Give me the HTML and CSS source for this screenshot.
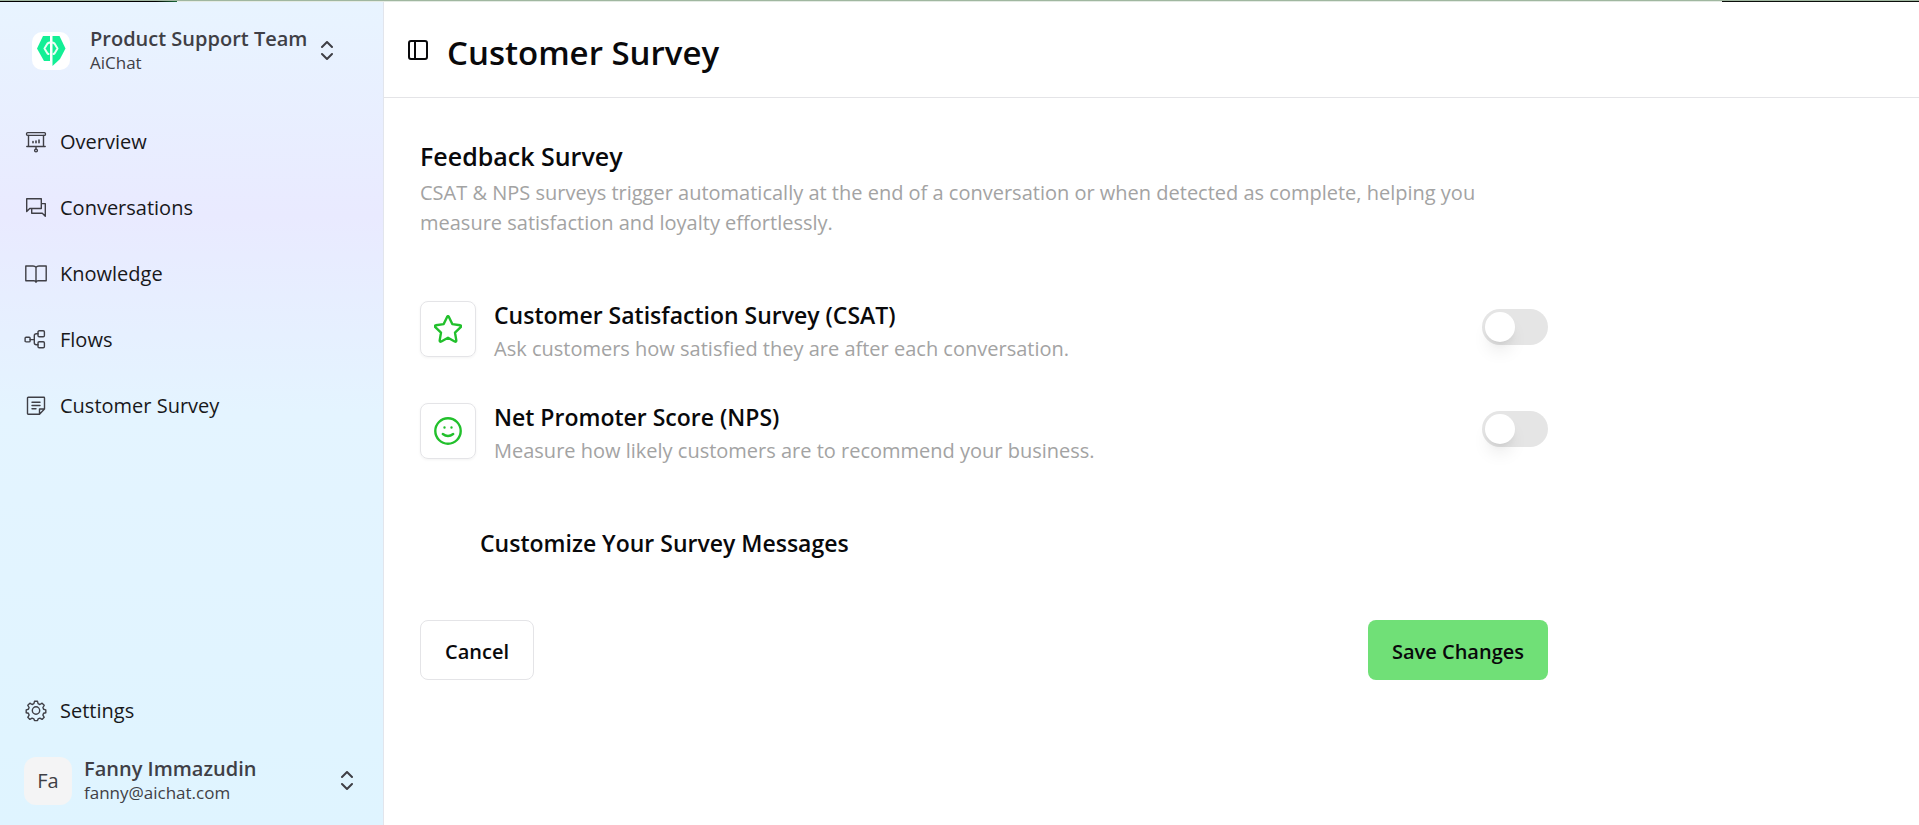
FILE: index.html
```html
<!DOCTYPE html>
<html lang="en">
<head>
<meta charset="utf-8">
<title>Customer Survey</title>
<link rel="stylesheet" href="styles.css">
</head>
<body>
<div class="topline"><span class="topline-left"></span><span class="topline-mid"></span><span class="topline-right"></span></div>
<div class="app">
  <aside class="sidebar">
    <button class="team" type="button">
      <svg class="team-logo" viewBox="0 0 38 38" aria-hidden="true">
        <rect width="38" height="38" rx="10" fill="#fff"/>
        <path d="M11 4H18V29H12L5 16.500Z" fill="#13ef95"/>
        <path d="M20.500 4H27.500L33.500 16.500L28 27L20.500 34V4Z" fill="#13ef95"/>
        <path d="M17.500 10.500L15.500 11.500L12.500 16.500L15.500 21.500L16.500 22M20.500 10.500L22.500 11.500L25.500 16.500L22.500 21.500L21.500 22" fill="none" stroke="#eafff5" stroke-width="2"/>
      </svg>
      <span class="who"><span class="who-name">Product Support Team</span><span class="who-sub">AiChat</span></span>
      <svg class="chevrons" viewBox="0 0 20 20"><path d="m5 6 5-5 5 5M5 13l5 5 5-5"/></svg>
    </button>
    <nav class="nav">
      <a class="nav-link" href="#"><svg class="icon" viewBox="0 0 20 20"><rect x=".6" y=".6" width="18.800" height="2.800" rx="1"/><path d="M2.500 3.400v11M17.500 3.400v11M.8 14.500h18.400M10 14.500v2.700"/><circle cx="10" cy="18.500" r="1.400"/><path d="M7 9.500v1.300M10 9v1.800M13 8v2.800" stroke-width="1.600"/></svg>Overview</a>
      <a class="nav-link" href="#"><svg class="icon" viewBox="0 0 20 20"><path d="M.7 13.500V.7h14.600v9.800H3.700zM15.300 5.600h4v12.700l-3-3H5.700v-4.800"/></svg>Conversations</a>
      <a class="nav-link" href="#"><svg class="icon" viewBox="0 0 20 20"><path d="M10 3.300Q9 2 7 2H-.2v14.800H8q1.500 0 2 1.500.5-1.500 2-1.500h8.200V2H13q-2 0-3 1.300zv15"/></svg>Knowledge</a>
      <a class="nav-link" href="#"><svg class="icon" viewBox="0 0 20 20"><rect x="-.9" y="7.300" width="5" height="4.600" rx="1"/><rect x="12" y=".8" width="6.400" height="6" rx="1.200"/><rect x="12" y="11.800" width="6.400" height="6" rx="1.200"/><path d="M4.100 9.600h4.200M12 3.800h-1.600q-2.100 0-2.100 2v7q0 2 2.100 2H12"/></svg>Flows</a>
      <a class="nav-link" href="#"><svg class="icon" viewBox="0 0 20 20"><path d="M2.200 1.300h15.600q.7 0 .7.700v11l-5 5.200H2.200q-.7 0-.7-.7V2q0-.7.700-.7zM13.500 18v-5h5M6 6.300h8M6 9.500h8M6 12.700h4"/></svg>Customer Survey</a>
    </nav>
    <div class="sidebar-foot">
      <a class="nav-link" href="#"><svg class="icon" viewBox="0 0 20 20"><circle cx="10" cy="9.500" r="3.700"/><path d="M8.500.3h3l.6 2.400 1.800.8 2.200-1.300 2.100 2.100-1.300 2.200.7 1.800 2.200.6v2.800l-2.200.6-.7 1.800 1.300 2.200-2.100 2.100-2.200-1.300-1.800.8-.6 1.700h-3l-.6-1.700-1.800-.8-2.200 1.300-2.100-2.100 1.300-2.200-.7-1.800-2.200-.6V8.900l2.200-.6.700-1.800-1.300-2.200 2.100-2.100 2.200 1.300 1.800-.8z"/></svg>Settings</a>
      <button class="account" type="button">
        <span class="avatar">Fa</span>
        <span class="who"><span class="who-name">Fanny Immazudin</span><span class="who-sub">fanny@aichat.com</span></span>
        <svg class="chevrons" viewBox="0 0 20 20"><path d="m5 6 5-5 5 5M5 13l5 5 5-5"/></svg>
      </button>
    </div>
  </aside>
  <main class="main">
    <header class="header">
      <button class="panel-toggle" type="button" aria-label="Toggle sidebar"><svg viewBox="0 0 20 20"><rect x="1" y="1" width="18" height="18" rx="2"/><path d="M7 1v18"/></svg></button>
      <h1 class="title">Customer Survey</h1>
    </header>
    <div class="content">
      <h2 class="section-title">Feedback Survey</h2>
      <p class="muted">CSAT &amp; NPS surveys trigger automatically at the end of a conversation or when detected as complete, helping you measure satisfaction and loyalty effortlessly.</p>
      <div class="options">
        <div class="option">
          <span class="tile"><svg viewBox="0 0 28 28"><path d="M13.100 1.900q.9-1.600 1.800 0l3.400 7.200 7.900 1.200q1.700.5.500 1.800l-5.700 5.500 1.300 7.800q.1 1.900-1.600 1.100L14 22.800l-6.700 3.700q-1.700.7-1.600-1.100L7 17.600l-5.700-5.500Q.1 10.800 1.800 10.300l7.900-1.200z"/></svg></span>
          <label class="option-text" for="csat"><span class="option-name">Customer Satisfaction Survey (CSAT)</span><span class="muted">Ask customers how satisfied they are after each conversation.</span></label>
          <input class="switch" type="checkbox" role="switch" id="csat">
        </div>
        <div class="option">
          <span class="tile"><svg viewBox="0 0 28 28"><circle cx="14" cy="14" r="12.700"/><path d="M8.800 17q5.200 4 10.400 0M10.500 10.400v.2M17.500 10.400v.2"/></svg></span>
          <label class="option-text" for="nps"><span class="option-name">Net Promoter Score (NPS)</span><span class="muted">Measure how likely customers are to recommend your business.</span></label>
          <input class="switch" type="checkbox" role="switch" id="nps">
        </div>
      </div>
      <h3 class="customize">Customize Your Survey Messages</h3>
      <div class="actions">
        <button class="btn btn-outline" type="button">Cancel</button>
        <button class="btn btn-primary" type="button">Save Changes</button>
      </div>
    </div>
  </main>
</div>
</body>
</html>
```
FILE: styles.css
```css
* { box-sizing: border-box; }
body {
  margin: 0;
  min-height: 100vh;
  display: flex;
  flex-direction: column;
  background: #fff;
  color: #09090b;
  font: 400 20px/30px "Open Sans", "Noto Sans", sans-serif;
}
h1, h2, h3, p { margin: 0; }
button { font: inherit; color: inherit; background: none; border: 0; padding: 0; text-align: left; }
svg { fill: none; stroke: currentColor; stroke-linecap: round; stroke-linejoin: round; flex: none; }

.topline { display: flex; height: 2px; border-top: 1px solid #a0b7a0; }
.topline-left { width: 177px; background: linear-gradient(90deg, #000 88%, #1b6b3a); }
.topline-mid { flex: 1; background: #e4ebe4; }
.topline-right { width: 197px; background: #0b0f0b; }

.app { flex: 1; display: flex; }
.sidebar {
  width: 384px;
  flex: none;
  display: flex;
  flex-direction: column;
  padding: 26px 24px 19px;
  border-right: 1px solid #e2e5ec;
  background: linear-gradient(180deg, #e8f4ff 0%, #e9eaff 26%, #e4f4ff 50%, #dff4ff 100%);
}
.team { display: flex; align-items: center; padding-left: 8px; height: 46px; color: #3f3f46; }
.team-logo { width: 38px; height: 38px; margin-right: 20px; stroke: none; }
.who { display: flex; flex-direction: column; }
.who-name { font-size: 20px; line-height: 24px; font-weight: 600; }
.who-sub { font-size: 17px; line-height: 24px; }
.chevrons { width: 20px; height: 20px; stroke-width: 2; }
.team .chevrons { margin-left: 10px; }

.nav { display: flex; flex-direction: column; gap: 16px; margin-top: 43px; }
.nav-link { display: flex; align-items: center; gap: 14px; height: 50px; padding-left: 2px; color: #18181b; text-decoration: none; }
.icon { width: 20px; height: 20px; overflow: visible; color: #3f3f46; stroke-width: 1.4; }
.sidebar-foot { margin-top: auto; display: flex; flex-direction: column; gap: 20px; }
.account { display: flex; align-items: center; height: 50px; color: #3f3f46; }
.avatar { width: 48px; height: 48px; margin-right: 12px; border-radius: 12px; background: #f4f4f5; display: grid; place-items: center; }
.account .chevrons { margin-left: auto; margin-right: 2px; }

.main { flex: 1; min-width: 0; }
.header { display: flex; align-items: center; gap: 19px; height: 96px; padding: 0 24px; border-bottom: 1px solid #e4e4e7; }
.panel-toggle { width: 20px; height: 20px; display: flex; }
.panel-toggle svg { width: 20px; height: 20px; stroke-width: 2; }
.title { font-size: 33px; line-height: 45px; font-weight: 600; padding-top: 6px; }

.content { max-width: 1200px; padding: 43px 36px; }
.section-title { font-size: 25px; line-height: 30px; font-weight: 600; }
.muted { color: #a3a3a3; }
.content > .muted { max-width: 1080px; padding-top: 7px; }
.options { display: flex; flex-direction: column; gap: 36px; padding-top: 58px; }
.option { display: flex; align-items: center; gap: 18px; height: 66px; }
.tile { width: 56px; height: 56px; border: 1px solid #e4e4e7; border-radius: 8px; display: grid; place-items: center; color: #22c02c; box-shadow: 0 1px 3px rgba(0, 0, 0, .05); }
.tile svg { width: 28px; height: 28px; stroke-width: 2.4; }
.option-text { flex: 1; display: flex; flex-direction: column; gap: 3px; padding-top: 4px; }
.option-name { font-size: 23px; line-height: 32px; font-weight: 600; }
.switch { appearance: none; margin: 0 0 4px; width: 66px; height: 36px; padding: 3px; border-radius: 18px; background: #e5e5e5; display: flex; }
.switch::before { content: ""; width: 30px; height: 30px; border-radius: 50%; background: #fff; box-shadow: 0 12px 18px -4px rgba(0, 0, 0, .1), 0 5px 8px -5px rgba(0, 0, 0, .1); }
.switch:checked { background: #70e077; justify-content: flex-end; }
.customize { font-size: 23px; line-height: 32px; font-weight: 600; padding: 63px 0 0 60px; }
.actions { display: flex; justify-content: space-between; padding-top: 61px; }
.btn { height: 60px; padding: 3px 24px 0; border-radius: 8px; font-weight: 600; text-align: center; }
.btn-outline { border: 1px solid #e4e4e7; }
.btn-primary { background: #70e077; }
```
